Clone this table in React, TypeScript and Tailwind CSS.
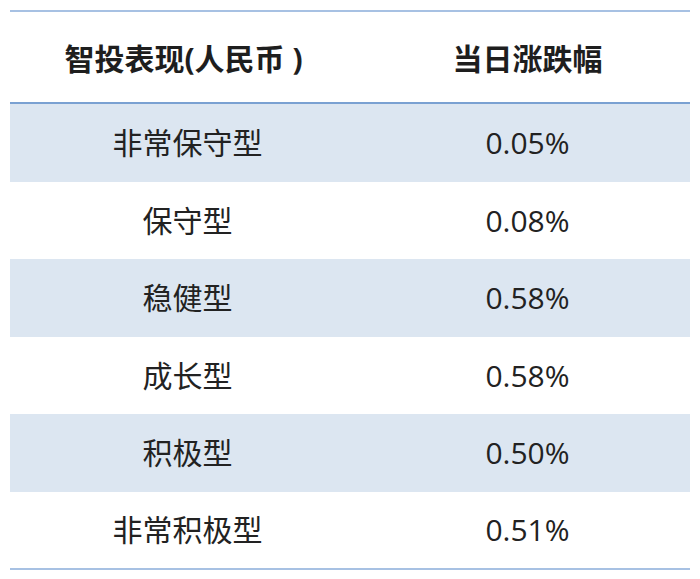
import React from "react";

const rows = [
  { name: "非常保守型", value: "0.05%" },
  { name: "保守型", value: "0.08%" },
  { name: "稳健型", value: "0.58%" },
  { name: "成长型", value: "0.58%" },
  { name: "积极型", value: "0.50%" },
  { name: "非常积极型", value: "0.51%" },
];

const App = () => {
  return (
    <div className="w-[700px] h-[579px] bg-white pt-[10px] px-[10px] font-['Segoe_UI','Open_Sans','Noto_Sans_CJK_SC',sans-serif] text-[#222]">
      <div className="border-t-2 border-b-2 border-t-[#a7c1e3] border-b-[#a7c1e3]">
        <div className="grid grid-cols-[355px_325px] h-[92px] items-center border-b-2 border-[#7aa1d2] text-[30px] font-bold text-[#1e1e1e]">
          <div className="text-center pt-[2px] pr-[8px]">智投表现(人民币 )</div>
          <div className="text-center pt-[2px]">当日涨跌幅</div>
        </div>
        {rows.map((r, i) => (
          <div
            key={i}
            className={`grid grid-cols-[355px_325px] items-center text-[30px] ${
              i === 5 ? "h-[76px]" : "h-[77.5px]"
            } ${i % 2 === 0 ? "bg-[#dce6f1]" : "bg-white"}`}
          >
            <div className="text-center">{r.name}</div>
            <div className="text-center">{r.value}</div>
          </div>
        ))}
      </div>
    </div>
  );
};

export default App;
